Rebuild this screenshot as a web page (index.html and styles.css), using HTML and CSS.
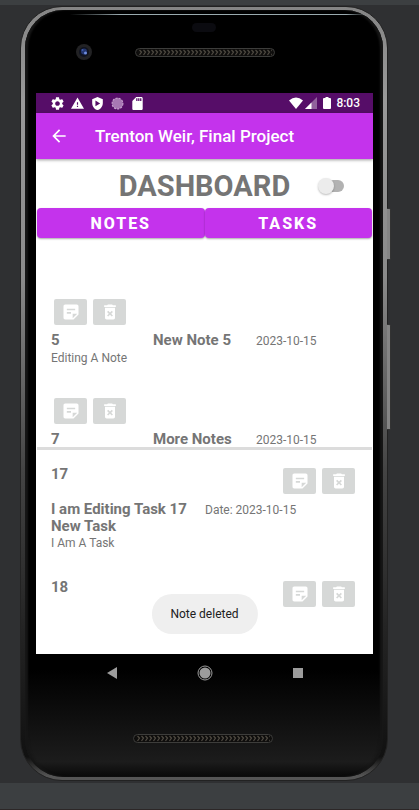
FILE: index.html
```html
<!DOCTYPE html>
<html lang="en">
<head>
<meta charset="utf-8">
<meta name="viewport" content="width=device-width, initial-scale=1">
<title>Dashboard</title>
<link rel="stylesheet" href="styles.css">
</head>
<body>
<svg class="sprite" aria-hidden="true">
  <symbol id="note" viewBox="0 0 24 24"><path d="M19 3H4.990C3.890 3 3 3.900 3 5l.01 14c0 1.100.89 2 1.990 2h10l6-6V5c0-1.100-.9-2-2-2zM7 8h10v2H7V8zm5 6H7v-2h5v2zm2 5.500V14h5.500L14 19.500z"/></symbol>
  <symbol id="trash" viewBox="0 0 24 24"><path d="M6 19c0 1.100.9 2 2 2h8c1.100 0 2-.9 2-2V7H6v12zm2.460-7.120l1.410-1.410L12 12.590l2.120-2.120 1.410 1.410L13.410 14l2.120 2.120-1.410 1.410L12 15.410l-2.120 2.120-1.410-1.410L10.590 14l-2.130-2.120zM15.500 4l-1-1h-5l-1 1H5v2h14V4z"/></symbol>
  <symbol id="grille" viewBox="0 0 140 9">
    <defs><pattern id="weave" width="4" height="9" patternUnits="userSpaceOnUse"><path d="M.5 2l2 2-2 3" fill="none" stroke="#4f4a41" stroke-width="1.200"/></pattern></defs>
    <rect x=".5" y=".5" width="139" height="8" rx="4" fill="#0e0d0c" stroke="#3d3d3b"/>
    <rect x="3" y="0" width="134" height="9" fill="url(#weave)"/>
  </symbol>
</svg>
<div class="phone">
  <span class="side-key power"></span>
  <span class="side-key volume"></span>
  <div class="glass">
    <div class="forehead">
      <span class="sensor"></span>
      <svg class="camera" viewBox="0 0 16 16"><circle cx="8" cy="8" r="8" fill="#222224"/><circle cx="8" cy="8" r="5" fill="#10131f"/><circle cx="8" cy="7.500" r="3" fill="#24366f"/><circle cx="9.500" cy="9" r="1.500" fill="#6f8de0"/><circle cx="6.500" cy="6" r="1" fill="#3f5bab"/></svg>
      <svg class="grille"><use href="#grille"/></svg>
    </div>

    <div class="screen">
      <div class="status">
        <svg viewBox="2 2 20 20"><path d="M19.140 12.940c.04-.3.060-.61.060-.94 0-.32-.02-.64-.07-.94l2.030-1.580c.18-.14.230-.41.120-.61l-1.920-3.320c-.12-.22-.37-.29-.59-.22l-2.390.96c-.5-.38-1.030-.7-1.620-.94l-.36-2.540c-.04-.24-.24-.41-.48-.41h-3.840c-.24 0-.43.170-.47.410l-.36 2.540c-.59.240-1.130.570-1.620.940l-2.390-.96c-.22-.08-.47 0-.59.220L2.740 8.870c-.12.210-.08.470.12.610l2.030 1.580c-.05.3-.09.630-.09.940s.02.640.07.940l-2.030 1.580c-.18.140-.23.410-.12.610l1.920 3.320c.12.220.37.290.59.220l2.390-.96c.5.380 1.030.7 1.620.940l.36 2.540c.05.240.24.410.48.410h3.840c.24 0 .44-.17.470-.41l.36-2.540c.59-.24 1.130-.56 1.620-.94l2.390.96c.22.080.47 0 .59-.22l1.920-3.320c.12-.22.070-.47-.12-.61l-2.010-1.580zM12 15.600c-1.980 0-3.600-1.620-3.600-3.600s1.620-3.600 3.600-3.600 3.600 1.620 3.600 3.600-1.620 3.600-3.600 3.600z"/></svg>
        <svg viewBox="1 1 22 22"><path d="M1 21h22L12 2 1 21zm12-3h-2v-2h2v2zm0-4h-2v-4h2v4z"/></svg>
        <svg viewBox="1 1 22 22"><path fill-rule="evenodd" d="M12 1L3 5v6c0 5.550 3.840 10.740 9 12 5.160-1.260 9-6.450 9-12V5l-9-4zM8.500 7v9.500L16.500 12z"/></svg>
        <svg viewBox="0 0 12 12"><circle cx="6" cy="6" r="5" fill="#a878b4" stroke="#c7a3cf" stroke-dasharray="2 1"/></svg>
        <svg viewBox="2 2 20 20"><path d="M18 2h-8L4.020 8 4 20c0 1.100.9 2 2 2h12c1.100 0 2-.9 2-2V4c0-1.100-.9-2-2-2zm-6 6h-2V4h2v4zm3 0h-2V4h2v4zm3 0h-2V4h2v4z"/></svg>
        <div class="status-end">
          <svg class="wifi" viewBox="0 0 14 12"><path d="M0 3.500Q7-2.500 14 3.500L7 12z"/></svg>
          <svg viewBox="0 0 12 12"><path d="M12 0v12H0z" opacity=".35"/><path d="M6.500 5.500V12H0z"/></svg>
          <svg class="battery" viewBox="0 0 8 12"><path d="M2.500 0h3v1H7q1 0 1 1v9q0 1-1 1H1q-1 0-1-1V2q0-1 1-1h1.500z"/></svg>
          <span>8:03</span>
        </div>
      </div>
      <header class="appbar">
        <button class="back" aria-label="Back"><svg viewBox="0 0 24 24"><path d="M20 11H7.830l5.590-5.590L12 4l-8 8 8 8 1.410-1.410L7.830 13H20v-2z"/></svg></button>
        <span>Trenton Weir, Final Project</span>
      </header>
      <div class="heading">
        <h1>DASHBOARD</h1>
        <input class="switch" type="checkbox" role="switch" aria-label="Toggle view">
      </div>
      <nav class="tabs"><button>NOTES</button><button>TASKS</button></nav>

      <main class="lists">
        <section class="notes">
          <article class="note">
            <div class="actions"><button aria-label="Edit note"><svg><use href="#note"/></svg></button><button aria-label="Delete note"><svg><use href="#trash"/></svg></button></div>
            <div class="note-row"><strong>5</strong><strong>New Note 5</strong><time>2023-10-15</time></div>
            <p>Editing A Note</p>
          </article>
          <article class="note">
            <div class="actions"><button aria-label="Edit note"><svg><use href="#note"/></svg></button><button aria-label="Delete note"><svg><use href="#trash"/></svg></button></div>
            <div class="note-row"><strong>7</strong><strong>More Notes</strong><time>2023-10-15</time></div>
          </article>
        </section>
        <div class="divider"></div>
        <section class="tasks">
          <article class="task">
            <div class="task-head"><strong>17</strong><div class="actions"><button aria-label="Edit task"><svg><use href="#note"/></svg></button><button aria-label="Delete task"><svg><use href="#trash"/></svg></button></div></div>
            <div class="task-row"><strong>I am Editing Task 17 New Task</strong><span>Date: 2023-10-15</span></div>
            <p>I Am A Task</p>
          </article>
          <article class="task">
            <div class="task-head"><strong>18</strong><div class="actions"><button aria-label="Edit task"><svg><use href="#note"/></svg></button><button aria-label="Delete task"><svg><use href="#trash"/></svg></button></div></div>
          </article>
        </section>
      </main>
      <div class="toast" role="status">Note deleted</div>
    </div>

    <div class="navbar">
      <button aria-label="Back"><svg viewBox="0 0 16 16"><path d="M13 2v12L3 8z"/></svg></button>
      <button aria-label="Home"><svg viewBox="0 0 16 16"><circle cx="8" cy="8" r="5.500"/><circle cx="8" cy="8" r="7" fill="none" stroke="#9c9c9c"/></svg></button>
      <button aria-label="Recents"><svg viewBox="0 0 16 16"><rect x="3" y="3" width="10" height="10"/></svg></button>
    </div>
    <div class="chin"><svg class="grille"><use href="#grille"/></svg></div>
  </div>
</div>
</body>
</html>
```
FILE: styles.css
```css
* { box-sizing: border-box; }

body {
  margin: 0;
  height: 100vh;
  padding: 6px 31px 29px 20px;
  background: linear-gradient(#3c3f41 5px, #2f3032 5px calc(100% - 27px), #3c3f41 calc(100% - 27px) calc(100% - 1px), #2c2727 calc(100% - 1px));
  color: #757575;
  font-family: Roboto, sans-serif;
  font-size: 12px;
  line-height: 17px;
}

button {
  border: 0;
  padding: 0;
  background: none;
  color: inherit;
  font: inherit;
}

svg { display: block; fill: currentColor; }
h1, p { margin: 0; }
.sprite { position: absolute; width: 0; height: 0; }

/* Device body */
.phone {
  position: relative;
  height: 100%;
  padding: 3px 4px;
  border: 1px solid #222;
  border-radius: 42px;
  background: linear-gradient(#858585, #999 12%, #8a8a8a 35%, #444 60%, #242424 80%, #111 97%, #555 99.500%);
}

.glass {
  display: flex;
  flex-direction: column;
  height: 100%;
  padding: 0 10px 0 11px;
  border-radius: 38px;
  background: linear-gradient(#000 86%, #1c1c1c 98%, #080808);
  box-shadow: inset 3px 0 2px #161616, inset -3px 0 2px #161616;
}

.side-key {
  position: absolute;
  left: 100%;
  width: 4px;
  border: 1px solid #333;
  border-left: 0;
  border-radius: 0 2px 2px 0;
  background: #858585;
}

.power { top: 26%; height: 52px; }
.volume { top: 41%; height: 106px; }

.forehead {
  display: grid;
  grid-template-columns: 16px 140px;
  column-gap: 43px;
  align-content: start;
  align-items: center;
  height: 83px;
  padding: 13px 0 0 40px;
  background: linear-gradient(90deg, transparent 10%, #9aaaaf 25% 92%, transparent 98%) 0 4px / 100% 1px no-repeat;
}

.sensor {
  grid-column: 1 / -1;
  width: 24px;
  height: 9px;
  margin: 0 0 12px 116px;
  border-radius: 5px;
  background: #0b0b10;
}

.camera { width: 16px; height: 16px; }
.grille { width: 140px; height: 9px; }

/* App screen */
.screen {
  position: relative;
  display: flex;
  flex: 1;
  flex-direction: column;
  min-height: 0;
  background: #fff;
}

.status {
  display: flex;
  align-items: center;
  gap: 7px;
  height: 20px;
  padding: 0 13px 0 15px;
  background: #560d68;
  color: #fff;
}

.status svg { width: 13px; height: 13px; }
.status-end { display: flex; align-items: center; gap: 2px; margin-left: auto; font-weight: 500; }
.status-end svg { width: 12px; height: 12px; }
.status-end .wifi { width: 14px; }
.status-end .battery { width: 8px; margin: 0 3px 0 4px; }

.appbar {
  position: relative;
  display: flex;
  align-items: center;
  gap: 26px;
  height: 46px;
  padding: 0 13px;
  background: #c433ec;
  box-shadow: 0 1px 3px #0006;
  color: #fff;
  font-size: 17px;
  font-weight: 500;
}

.back svg { width: 20px; height: 20px; }

.heading {
  display: grid;
  grid-template-columns: 1fr auto 1fr;
  align-items: center;
  height: 49px;
  padding: 4px 29px 0;
}

h1 { grid-column: 2; font-size: 29px; line-height: 34px; font-weight: 700; }

.switch {
  position: relative;
  justify-self: end;
  width: 24px;
  height: 12px;
  margin: 0;
  border-radius: 6px;
  background: #b2b2b2;
  appearance: none;
}

.switch::before {
  content: "";
  position: absolute;
  top: -2px;
  left: -2px;
  width: 16px;
  height: 16px;
  border-radius: 50%;
  background: #ececec;
  box-shadow: 0 1px 2px #0004;
}

.tabs { display: flex; padding: 0 1px; }

.tabs button {
  flex: 1;
  height: 30px;
  border-radius: 4px;
  background: #c433ec;
  box-shadow: 0 1px 2px #0005;
  color: #fff;
  font-size: 16px;
  font-weight: 800;
  letter-spacing: 2px;
}

.lists {
  display: grid;
  flex: 1;
  grid-template-rows: minmax(0, 52fr) 3px minmax(0, 51fr);
  min-height: 0;
}

.notes, .tasks { overflow: hidden; padding: 0 18px 0 15px; }
.notes { padding-top: 61px; }
.tasks { padding-top: 16px; }
.divider { margin: 0 1px; background: #dcdcdc; }

strong { font-size: 15px; font-weight: 700; }

.actions { display: flex; gap: 6px; }

.actions button {
  display: grid;
  place-items: center;
  width: 33px;
  height: 26px;
  border-radius: 2px;
  background: #d6d8d7;
  color: #fff;
}

.actions svg { width: 20px; height: 20px; }

.note { margin-bottom: 31px; }
.note .actions { padding: 0 3px 7px; }
.note-row { display: grid; grid-template-columns: 102px 103px 1fr; align-items: baseline; }

.task { margin-bottom: 27px; }
.task-head { display: flex; justify-content: space-between; margin-bottom: 7px; }
.task-head .actions { padding-top: 2px; }
.task-row { display: grid; grid-template-columns: 140px 1fr; column-gap: 14px; align-items: baseline; }

.toast {
  position: absolute;
  bottom: 20px;
  left: 50%;
  padding: 12px 19px 11px;
  border-radius: 20px;
  background: #efefef;
  color: #202020;
  transform: translateX(-50%);
  white-space: nowrap;
}

/* System navigation */
.navbar { display: flex; justify-content: center; gap: 77px; padding-top: 11px; color: #9c9c9c; }
.navbar svg { width: 16px; height: 16px; }
.chin { display: flex; justify-content: center; height: 96px; padding: 53px 4px 0 0; }
```
